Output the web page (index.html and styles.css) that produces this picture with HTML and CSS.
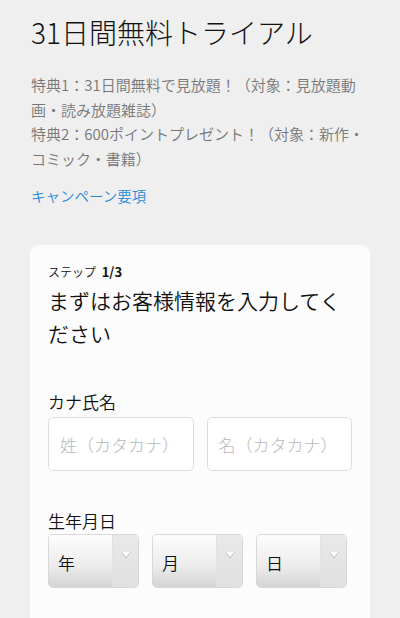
FILE: index.html
```html
<!DOCTYPE html>
<html lang="ja">
<head>
    <meta charset="utf-8">
    <title>31日間無料トライアル</title>
    <link rel="stylesheet" href="styles.css">
</head>
<body>
<div class="page">
    <h1 class="title">31日間無料トライアル</h1>
    <p class="lead">特典1：31日間無料で見放題！（対象：見放題動画・読み放題雑誌）<br>特典2：600ポイントプレゼント！（対象：新作・コミック・書籍）</p>
    <a class="link" href="#">キャンペーン要項</a>

    <div class="card">
        <div class="step">ステップ <b>1/3</b></div>
        <h2 class="heading">まずはお客様情報を入力してください</h2>

        <div class="field">
            <div class="label">カナ氏名</div>
            <div class="row">
                <input class="text" type="text" placeholder="姓（カタカナ）">
                <input class="text" type="text" placeholder="名（カタカナ）">
            </div>
        </div>

        <div class="field">
            <div class="label">生年月日</div>
            <div class="row">
                <div class="select"><span class="value">年</span><span class="arrow"><i></i></span></div>
                <div class="select"><span class="value">月</span><span class="arrow"><i></i></span></div>
                <div class="select"><span class="value">日</span><span class="arrow"><i></i></span></div>
            </div>
        </div>
    </div>
</div>
</body>
</html>
```

FILE: styles.css
```css
body {
    margin: 0;
    background-color: #efefef;
    font-family: "Noto Sans CJK JP", "Noto Sans", sans-serif;
    font-weight: 350;
    color: #111;
}

.page {
    padding: 0 30px 0 31px;
}

.title {
    margin: 12px 0 0;
    font-size: 28px;
    font-weight: 300;
    line-height: 40px;
}

.lead {
    margin: 21px 0 0;
    font-size: 15px;
    line-height: 24.5px;
    color: #777;
}

.link {
    display: block;
    margin-top: 13px;
    font-size: 14.5px;
    line-height: 24px;
    color: #2a8bd9;
    text-decoration: none;
}

.card {
    margin: 37px 0 0 -1px;
    padding: 18px 18px 40px;
    background-color: #fcfcfc;
    border-radius: 9px;
}

.step {
    font-size: 12px;
    line-height: 18px;
}

.step b {
    margin-left: 3px;
    font-size: 13px;
    font-weight: bold;
}

.heading {
    margin: 3px 0 0;
    font-size: 21px;
    font-weight: 350;
    line-height: 33px;
}

.field {
    margin-top: 40px;
}

.label {
    font-size: 17px;
    line-height: 24px;
}

.row {
    display: flex;
    gap: 13px;
    margin-top: 3px;
}

.text {
    flex: 1;
    min-width: 0;
    height: 54px;
    box-sizing: border-box;
    padding: 0 11px;
    border: 1px solid #dcdcdc;
    border-radius: 5px;
    background: #fff;
    font-family: inherit;
    font-weight: 300;
    font-size: 17px;
    color: #111;
}

.text::placeholder {
    color: #b8b8b8;
}

.field + .field {
    margin-top: 38px;
}

.field + .field .row {
    margin-top: 1px;
}

.select {
    display: flex;
    width: 91px;
    height: 54px;
    box-sizing: border-box;
    border: 1px solid #d8d8d8;
    border-radius: 5px;
    overflow: hidden;
}

.select .value {
    flex: 1;
    display: flex;
    align-items: center;
    padding-left: 9px;
    padding-top: 3px;
    font-size: 17px;
    background: linear-gradient(#fdfdfd, #ececec 60%, #d4d4d4);
}

.select .arrow {
    width: 26px;
    display: flex;
    justify-content: center;
    padding-top: 17px;
    box-sizing: border-box;
    background: linear-gradient(#e9e9e9, #e0e0e0);
    border-left: 1px solid #e2e2e2;
}

.select .arrow i {
    width: 0;
    height: 0;
    border-left: 5px solid transparent;
    border-right: 5px solid transparent;
    border-top: 7px solid #c9c9c9;
    position: relative;
}

.select .arrow i::after {
    content: "";
    position: absolute;
    left: -4px;
    top: -7px;
    border-left: 4px solid transparent;
    border-right: 4px solid transparent;
    border-top: 5px solid #fff;
}
```
